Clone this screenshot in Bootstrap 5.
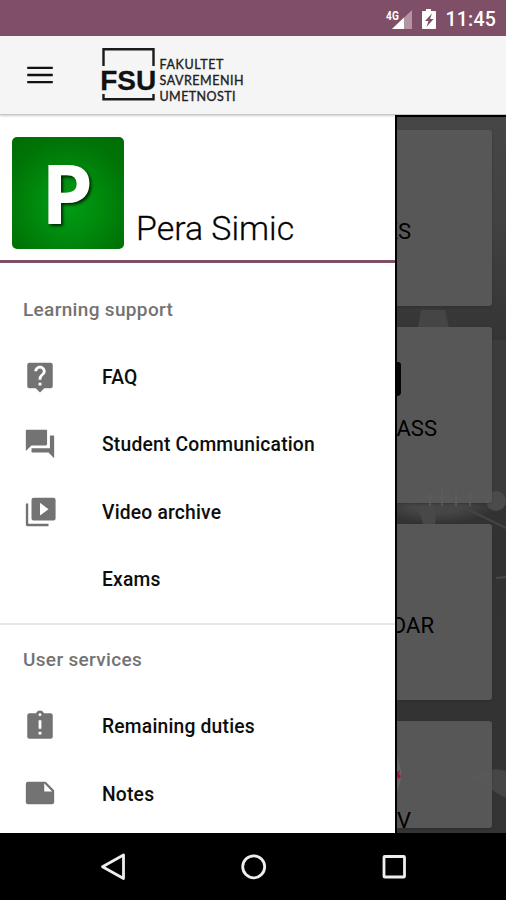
<!DOCTYPE html>
<html lang="en">
<head>
<meta charset="utf-8">
<meta name="viewport" content="width=device-width, initial-scale=1">
<title>FSU</title>
<link href="https://cdn.jsdelivr.net/npm/bootstrap@5.3.0/dist/css/bootstrap.min.css" rel="stylesheet">
<style>
body{font-family:Roboto,"Noto Sans",sans-serif;width:506px;height:900px;color:#000;line-height:1}
.statusbar{height:36px;background:#7f4e67;color:#fff;padding:3px 10px 0 0;font-size:19.5px;font-weight:500;letter-spacing:.2px}
.appbar{height:79px;background:#f5f5f5;border-bottom:1px solid #c6c6c6;padding-left:23px;box-shadow:0 1px 2px #0003;z-index:2}
.logo{margin-left:44px}
.main{height:718px}
.drawer{width:395px;background:#fff}
.profile{height:148px;padding:22px 0 0 12px;border-bottom:3px solid #7f4e67}
.avatar{width:112px;height:112px;border-radius:5px;background:radial-gradient(circle at 50% 60%,#009c14 0,#008c0d 35%,#007407 72%,#006c06 100%);font:700 83px/1 "Open Sans",sans-serif;color:#fff;text-shadow:2px 2px 3px #002a04;padding:0 2px 3px 0}
.person{font-size:33.9px;font-weight:300;margin:75px 0 0 12px;color:#000;-webkit-text-stroke:.3px #111}
.section-title{font-size:19px;font-weight:500;color:#737373;padding-left:23px;letter-spacing:.33px}
.first{height:80px;padding-top:12px}
.second{height:69px;border-top:2px solid #e7e7e7;margin-top:10px;padding-top:2px}
.entry{height:67.5px;padding-left:23px;font-size:19.3px;font-weight:500;letter-spacing:.19px;color:#0d0d0d}
.entry svg,.entry .blank{width:34px;height:34px;fill:#737373;margin-right:45px}
.entry .caption-text{padding-top:1.2px}
.second~.entry .caption-text{padding-top:2.6px}
.backdrop{border-left:2px solid #000;border-top:2px solid #000;background:radial-gradient(ellipse 60px 20px at 40px 387px,#464646 45%,transparent 100%),linear-gradient(#464646 0,#424242 100px,#353535 220px,#323232 430px,#343434)}
.backdrop .scenery{inset:0}
.tile{width:95px;height:176px;margin-bottom:21px;background:rgba(88,88,88,.96);border-radius:0 3px 3px 0;box-shadow:0 1px 2px #2226;font-size:22px}
.tile:first-of-type{margin-top:13px}
.tile.tail{height:107px}
.tile span{margin-top:91px}
.tail span{margin-top:89px}
.end-82{padding-right:81px}
.end-55{padding-right:55px}
.end-58{padding-right:58px}
.sysbar{height:67px;background:#000}
</style>
</head>
<body class="overflow-hidden">
<div class="statusbar d-flex align-items-center justify-content-end">
<svg width="54" height="24" viewBox="0 0 54 24" class="me-2"><path d="M8 21 28 2v19z" fill="#b294a3"/><path d="M8 21 20 9.500V21z" fill="#fff"/><text x="2" y="11.500" font-size="12" font-weight="700" fill="#fff" stroke="#7f4e67" stroke-width="1" paint-order="stroke" textLength="13" lengthAdjust="spacingAndGlyphs">4G</text><path d="M42 1h5v2h4q1 0 1 1v16q0 1-1 1H39q-1 0-1-1V4q0-1 1-1h3z" fill="#fff"/><path d="M48 5.500 41 13h3.500l-2 6 7-8H46z" fill="#7f4e67"/></svg>
<span>11:45</span>
</div>
<header class="appbar d-flex align-items-center position-relative">
<svg width="34" height="34" viewBox="0 0 24 24"><path d="M3 17.800h18v-1.600H3zm0-5h18v-1.600H3zM3 6.200v1.600h18V6.200z" fill="#111"/></svg>
<svg class="logo" width="145" height="56" viewBox="0 0 145 56"><path d="M2.500 19V2.300h50V19M2.500 47v5.200h50V47" fill="none" stroke="#1a1a1a" stroke-width="2.400"/><text x="-.8" y="43.300" font-family="Liberation Sans,sans-serif" fill="#111" font-weight="700" font-size="28.500" stroke="#111" stroke-width=".3" textLength="56" lengthAdjust="spacingAndGlyphs">FSU</text><g font-family="Lato,sans-serif" fill="#222" font-weight="400" font-size="12.500" stroke="#222" stroke-width=".35"><text x="58.500" y="22" textLength="64">FAKULTET</text><text x="58.500" y="38" textLength="84">SAVREMENIH</text><text x="58.500" y="54" textLength="76">UMETNOSTI</text></g></svg>
</header>
<main class="main d-flex overflow-hidden">
<nav class="drawer flex-shrink-0">
<div class="profile d-flex align-items-start">
<div class="avatar d-flex align-items-center justify-content-center">P</div>
<div class="person">Pera Simic</div>
</div>
<div class="section-title first d-flex align-items-center">Learning support</div>
<div class="entry d-flex align-items-center"><svg viewBox="0 0 24 24"><path d="M19.500 2H4.500Q3 2 3 3.500v15Q3 20 4.500 20H9l3 3 3-3h4.500q1.500 0 1.500-1.500v-15Q21 2 19.500 2zM13 18h-2v-2h2v2zm2.070-7.750-.9.920C13.450 11.900 13 12.500 13 14h-2v-.5c0-1.100.45-2.100 1.170-2.830l1.240-1.260c.37-.36.59-.86.59-1.410 0-1.100-.9-2-2-2s-2 .9-2 2H8c0-2.210 1.790-4 4-4s4 1.790 4 4c0 .88-.36 1.680-.93 2.250z"/></svg><span class="caption-text">FAQ</span></div>
<div class="entry d-flex align-items-center"><svg viewBox="0 0 24 24"><path d="M21.500 6H19v9H6v2.500q0 .5.500.5H18l4 4V6.500q0-.5-.5-.5zM17 12V2.500q0-.5-.5-.5h-14Q2 2 2 2.500V17l4-4h10q1 0 1-1z"/></svg><span class="caption-text">Student Communication</span></div>
<div class="entry d-flex align-items-center"><svg viewBox="0 0 24 24"><path d="M3.700 6H2v15q0 1 1 1h15v-1.700H3.700V6zM21.500 2h-14Q6 2 6 3.500v13Q6 18 7.500 18h14q1.500 0 1.500-1.500v-13Q23 2 21.500 2zM12 14.500v-9l6 4.500-6 4.500z"/></svg><span class="caption-text">Video archive</span></div>
<div class="entry d-flex align-items-center"><span class="blank"></span><span class="caption-text">Exams</span></div>
<div class="section-title second d-flex align-items-center">User services</div>
<div class="entry d-flex align-items-center"><svg viewBox="0 0 24 24"><path d="M19.500 3h-4.680C14.400 1.840 13.300 1 12 1s-2.400.84-2.820 2H4.500Q3 3 3 4.500v15Q3 21 4.500 21h15q1.500 0 1.500-1.500v-15Q21 3 19.500 3zM13 18h-2v-2h2v2zm0-4h-2V8h2v6zm-1-9c-.55 0-1-.45-1-1s.45-1 1-1 1 .45 1 1-.45 1-1 1z"/></svg><span class="caption-text">Remaining duties</span></div>
<div class="entry d-flex align-items-center"><svg viewBox="0 0 24 24"><path d="M16 4H3.500Q2 4 2 5.500v13Q2 20 3.500 20h17q1.500 0 1.500-1.500V10l-6-6zm-1 6.500V5.200l5.500 5.800h-5q-.5 0-.5-.5z"/></svg><span class="caption-text">Notes</span></div>
</nav>
<section class="backdrop flex-grow-1 position-relative overflow-hidden">
<svg class="scenery position-absolute" width="109" height="716" viewBox="397 117 109 716"><path d="M418 328l3-18h24l4 18z" fill="#454545"/><path d="M492 340h14v160h-14z" fill="#3b3b3b"/><circle cx="496" cy="501" r="10" fill="#4b4b4b"/><path d="M463 507l43 21" stroke="#454545" stroke-width="2"/><path d="M496 578l10-1" stroke="#484848" stroke-width="2"/><path d="M420 505h13q4 8 2 20h-12q-2-13-8-17z" fill="#484848"/><path d="M468 776q24-10 38-5v27q-17-9-38-22z" fill="#464646"/></svg>
<div class="tile end-82 d-flex justify-content-end overflow-hidden position-relative"><span>KS</span></div>
<div class="tile end-55 d-flex justify-content-end overflow-hidden position-relative"><span>CLASS</span></div>
<div class="tile end-58 d-flex justify-content-end overflow-hidden position-relative"><span>CALENDAR</span></div>
<div class="tile tail end-82 d-flex justify-content-end overflow-hidden position-relative"><span>TV</span></div>
<svg class="scenery position-absolute" width="109" height="716" viewBox="397 117 109 716"><path d="M397 362h1q3 0 3 3v27q0 4-4 4z" fill="#050505"/><path d="M397 757q8 16 0 35z" fill="#686868"/><path d="M397 772l3-2-1 4 2 2-2 3-2-2z" fill="#981c38"/><g stroke="#5e5e5e" stroke-width="1.500"><path d="M430 494v12M442 488v18M456 492v14M470 492v14"/></g></svg>
</section>
</main>
<footer class="sysbar d-flex align-items-center">
<svg width="506" height="67" viewBox="0 0 506 67" fill="none" stroke="#eee" stroke-width="2.800" stroke-linejoin="round"><path d="M102.500 33.700 123.500 22v23.500z"/><circle cx="253.700" cy="33.800" r="11"/><rect x="384" y="23.500" width="20.500" height="20.500" rx=".8"/></svg>
</footer>
<script src="https://cdn.jsdelivr.net/npm/bootstrap@5.3.0/dist/js/bootstrap.bundle.min.js"></script>
</body>
</html>
